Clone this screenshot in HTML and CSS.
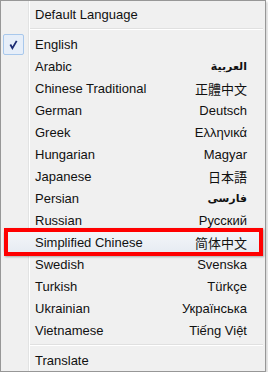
FILE: index.html
```
<!DOCTYPE html>
<html lang="en">
<head>
    <meta charset="UTF-8">
    <meta name="viewport" content="width=device-width, initial-scale=1.0">
    <title>Language Menu</title>
    <link rel="stylesheet" href="styles.css">
</head>
<body>
    <div class="menu">
        <div class="item"><span class="icon"></span><span class="label">Default Language</span></div>
        <div class="sep"></div>
        <div class="item checked">
            <span class="icon">
                <svg width="21" height="21" viewBox="0 0 21 21">
                    <path d="M7 10.5 L9.3 14.5 L14 6.5" fill="none" stroke="#1b2a72" stroke-width="2"/>
                </svg>
            </span>
            <span class="label">English</span>
        </div>
        <div class="item"><span class="icon"></span><span class="label">Arabic</span><span class="native" lang="ar">العربية</span></div>
        <div class="item"><span class="icon"></span><span class="label">Chinese Traditional</span><span class="native" lang="zh-TW">正體中文</span></div>
        <div class="item"><span class="icon"></span><span class="label">German</span><span class="native">Deutsch</span></div>
        <div class="item"><span class="icon"></span><span class="label">Greek</span><span class="native">Ελληνικά</span></div>
        <div class="item"><span class="icon"></span><span class="label">Hungarian</span><span class="native">Magyar</span></div>
        <div class="item"><span class="icon"></span><span class="label">Japanese</span><span class="native" lang="ja">日本語</span></div>
        <div class="item"><span class="icon"></span><span class="label">Persian</span><span class="native" lang="fa">فارسی</span></div>
        <div class="item"><span class="icon"></span><span class="label">Russian</span><span class="native">Русский</span></div>
        <div class="item hover marked"><span class="icon"></span><span class="label">Simplified Chinese</span><span class="native" lang="zh-CN">简体中文</span></div>
        <div class="item"><span class="icon"></span><span class="label">Swedish</span><span class="native">Svenska</span></div>
        <div class="item"><span class="icon"></span><span class="label">Turkish</span><span class="native">Türkçe</span></div>
        <div class="item"><span class="icon"></span><span class="label">Ukrainian</span><span class="native">Українська</span></div>
        <div class="item"><span class="icon"></span><span class="label">Vietnamese</span><span class="native">Tiếng Việt</span></div>
        <div class="sep"></div>
        <div class="item"><span class="icon"></span><span class="label">Translate</span></div>
    </div>
</body>
</html>
```

FILE: styles.css
```
* {
    margin: 0;
    padding: 0;
    box-sizing: border-box;
}

body {
    background: #fff;
    font-family: "Liberation Sans", "Noto Sans CJK SC", "DejaVu Sans", sans-serif;
    font-size: 13px;
    color: #111;
}

.menu {
    width: 266px;
    border: 1px solid #979797;
    padding: 2px 2px 0 2px;
    background:
        linear-gradient(to right,
            transparent 27px, #e2e3e3 27px, #e2e3e3 28px,
            #fff 28px, #fff 29px, transparent 29px),
        #f0f0f0;
    box-shadow: 2px 2px 2px rgba(0, 0, 0, 0.15);
}

.item {
    position: relative;
    height: 22px;
    display: flex;
    align-items: center;
    padding-right: 16px;
}

.icon {
    width: 21px;
    height: 21px;
    margin-right: 11px;
    display: flex;
    align-items: center;
    justify-content: center;
}

.checked .icon {
    border: 1px solid #a8c8ec;
    border-radius: 2px;
    background: #e6eef9;
}

.label {
    flex: 1;
    white-space: nowrap;
}

.native {
    white-space: nowrap;
}

.native:lang(zh-CN) {
    font-family: "Noto Sans CJK SC", sans-serif;
}

.native:lang(zh-TW) {
    font-family: "Noto Sans CJK TC", sans-serif;
}

.native:lang(ja) {
    font-family: "Noto Sans CJK JP", sans-serif;
}

.native:lang(ar),
.native:lang(fa) {
    font-family: "DejaVu Sans", sans-serif;
    font-weight: bold;
    font-size: 11px;
}

.hover {
    background: linear-gradient(#f4f6f9, #e6ebf2);
    border-radius: 3px;
    box-shadow: inset 0 0 0 1px #d9e0ea;
}

.marked::after {
    content: "";
    position: absolute;
    left: 1px;
    right: 0;
    top: -3px;
    bottom: -3px;
    border: 4px solid #f00;
    box-shadow: 1px 1px 2px rgba(0, 0, 0, 0.3);
}

.sep {
    height: 8px;
    margin-left: 27px;
    display: flex;
    flex-direction: column;
    justify-content: center;
}

.sep::before {
    content: "";
    height: 1px;
    background: #e0e0e0;
    border-bottom: 1px solid #fff;
    box-sizing: content-box;
}
```
